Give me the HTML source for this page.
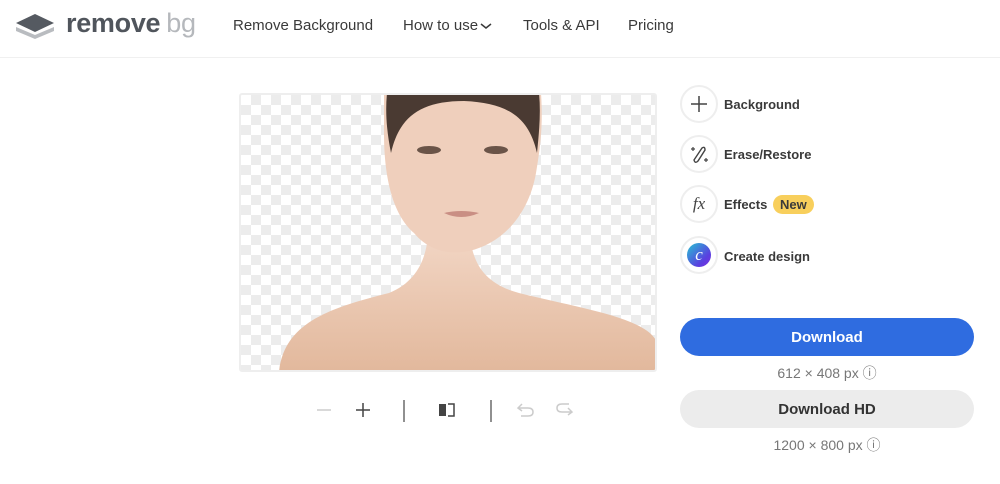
<!DOCTYPE html>
<html><head><meta charset="utf-8"><style>
*{margin:0;padding:0;box-sizing:border-box}
body{width:1000px;height:484px;background:#fff;font-family:"Liberation Sans",sans-serif;color:#454545;position:relative;overflow:hidden}
.hdr{position:absolute;left:0;top:0;width:1000px;height:58px;border-bottom:1px solid #f0f0f0}
.nav{position:absolute;top:17px;font-size:15px;color:#3a3a3a}
.img{position:absolute;left:239px;top:93px;width:418px;height:279px;border:2px solid #eee;border-radius:3px;overflow:hidden;
background-color:#fff;background-image:linear-gradient(45deg,#ececec 25%,transparent 25%,transparent 75%,#ececec 75%),linear-gradient(45deg,#ececec 25%,transparent 25%,transparent 75%,#ececec 75%);background-size:20px 20px;background-position:0 0,10px 10px}
.circ{position:absolute;left:680px;width:38px;height:38px;border:2px solid #eee;border-radius:50%;display:flex;align-items:center;justify-content:center}
.lbl{position:absolute;left:724px;font-size:13px;font-weight:bold;color:#3a3a3a}
.btn{position:absolute;left:680px;width:294px;height:38px;border-radius:19px;font-size:15px;font-weight:bold;text-align:center;line-height:40px}
.sub{position:absolute;font-size:14px;color:#777;width:294px;left:680px;text-align:center}
</style></head><body>
<div class="hdr">
<svg style="position:absolute;left:15px;top:12px" width="40" height="28" viewBox="0 0 40 28"><path d="M1 15 L20 23 L39 15 L39 19 L20 27 L1 19Z" fill="#b9bcc0"/><path d="M20 2 L39 11 L20 20 L1 11Z" fill="#555a61"/></svg>
<div style="position:absolute;left:66px;top:8px;font-size:27px;font-weight:bold;color:#50555c;letter-spacing:-0.3px">remove<span style="color:#b5b8bc;font-weight:normal;margin-left:6px">bg</span></div>
<div class="nav" style="left:233px">Remove Background</div>
<div class="nav" style="left:403px">How to use<svg width="12" height="8" style="margin-left:2px" viewBox="0 0 12 8"><path d="M1 2 L6 6 L11 2" stroke="#3a3a3a" stroke-width="1.5" fill="none"/></svg></div>
<div class="nav" style="left:523px">Tools &amp; API</div>
<div class="nav" style="left:628px">Pricing</div>
</div>
<div class="img">
<svg width="418" height="279" viewBox="0 0 418 279" style="position:absolute;left:-2px;top:-2px">
<defs><linearGradient id="sk" x1="0" y1="0" x2="0" y2="1"><stop offset="0" stop-color="#f1d4c2"/><stop offset="1" stop-color="#e2b89c"/></linearGradient></defs>
<path d="M40 279 C45 230 90 215 150 200 C175 190 185 170 188 150 L232 150 C236 175 250 192 280 200 C340 215 410 225 418 250 L418 279Z" fill="url(#sk)"/>
<path d="M145 0 L302 0 C304 30 302 50 297 80 C290 120 265 150 230 158 C210 162 190 158 175 140 C152 120 145 80 145 40Z" fill="#efcfbc"/>
<path d="M148 0 L300 0 C302 20 300 40 298 60 C290 25 270 10 225 8 C180 8 160 25 152 60 C148 40 146 20 148 0Z" fill="#4a3a32"/>
<ellipse cx="190" cy="57" rx="12" ry="4" fill="#6a5448"/><ellipse cx="257" cy="57" rx="12" ry="4" fill="#6a5448"/>
<path d="M205 120 Q222 128 240 120 Q222 116 205 120Z" fill="#c98f84"/>
</svg>
</div>
<svg style="position:absolute;left:315px;top:400px" width="270" height="22" viewBox="0 0 270 22">
<path d="M2 10 H16" stroke="#ccc" stroke-width="1.5"/><path d="M41 10 H55 M48 3 V17" stroke="#444" stroke-width="1.5"/>
<path d="M89 -4 V24" stroke="#555" stroke-width="1.3"/>
<rect x="124" y="4" width="7" height="12" fill="#444"/><path d="M133 4 H139 V16 H133" stroke="#444" stroke-width="1.5" fill="none"/>
<path d="M176 -4 V24" stroke="#555" stroke-width="1.3"/>
<path d="M207 4 L203 8 L207 11 M203 8 H213 Q218 8 218 12 Q218 16 213 16 H206" stroke="#ccc" stroke-width="1.5" fill="none"/>
<path d="M253 8 L257 12 L253 15 M257 12 H247 Q242 12 242 8 Q242 4 247 4 H254" stroke="#ccc" stroke-width="1.5" fill="none"/>
</svg>
<div class="circ" style="top:85px"><svg width="18" height="18"><path d="M9 1V17M1 9H17" stroke="#444" stroke-width="1.5"/></svg></div>
<div class="lbl" style="top:97px">Background</div>
<div class="circ" style="top:135px"><svg width="22" height="22" viewBox="0 0 22 22"><path d="M6 17 L14 5 Q17 3 17 7 L10 18 Q7 21 6 17Z" stroke="#444" stroke-width="1.4" fill="none"/><path d="M5 4v4M3 6h4M18 15v4M16 17h4" stroke="#444" stroke-width="1.2"/></svg></div>
<div class="lbl" style="top:147px">Erase/Restore</div>
<div class="circ" style="top:185px"><span style="font-family:'Liberation Serif',serif;font-style:italic;font-size:17px;color:#444">fx</span></div>
<div class="lbl" style="top:197px">Effects <span style="background:#f8cf5c;border-radius:10px;padding:2px 7px;margin-left:2px">New</span></div>
<div class="circ" style="top:236px"><div style="width:24px;height:24px;border-radius:50%;background:linear-gradient(135deg,#27c3d3,#5a3fe0 70%,#7b2fe0);color:#fff;font-family:'Liberation Serif',serif;font-style:italic;font-size:17px;text-align:center;line-height:24px">c</div></div>
<div class="lbl" style="top:249px">Create design</div>
<div class="btn" style="top:318px;background:#2f6ce0;color:#fff">Download</div>
<div class="sub" style="top:363px">612 × 408 px ⓘ</div>
<div class="btn" style="top:390px;background:#ececec;color:#333">Download HD</div>
<div class="sub" style="top:435px">1200 × 800 px ⓘ</div>
</body></html>
